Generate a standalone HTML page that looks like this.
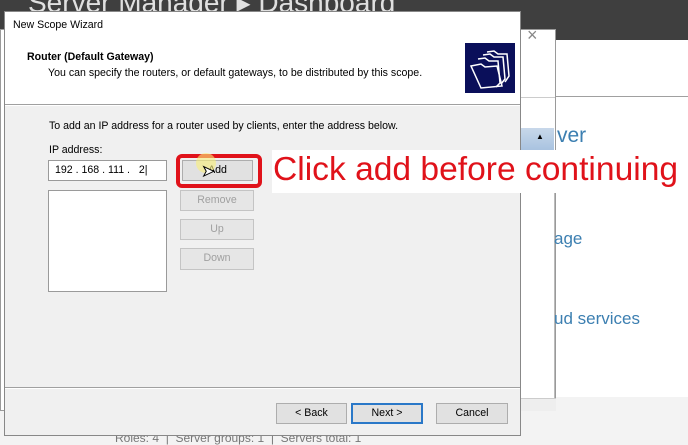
<!DOCTYPE html>
<html><head><style>
*{margin:0;padding:0;box-sizing:border-box}
body{width:688px;height:442px;overflow:hidden;position:relative;background:#f3f3f3;font-family:"Liberation Sans",sans-serif;font-size:10.6px;color:#000}
.a{position:absolute;white-space:nowrap}
.btn{position:absolute;background:#e1e1e1;border:1px solid #adadad;text-align:center;font-size:10.6px;line-height:19px;color:#000}
.dis{color:#a0a0a0;background:#e6e6e6;border-color:#c4c4c4}
</style></head><body>
<div class="a" style="left:0;top:0;width:688px;height:40px;background:#3f3f3f"></div>
<div class="a" style="left:28px;top:-14px;font-size:28px;color:#e0e0e0">Server Manager ▸ Dashboard</div>
<div class="a" style="left:555px;top:40px;width:133px;height:357px;background:#fff"></div>
<div class="a" style="left:555px;top:96px;width:133px;height:1px;background:#a0a0a0"></div>
<div class="a" style="left:0;top:29px;width:556px;height:382px;background:#fff;border:1px solid #9a9a9a"></div>
<div class="a" style="left:527px;top:25px;font-size:18px;color:#888">×</div>
<div class="a" style="left:520px;top:97px;width:35px;height:1px;background:#ccc"></div>
<div class="a" style="left:520px;top:128px;width:34px;height:40px;background:#eaeaea;border-top:2px solid #888"></div>
<div class="a" style="left:520px;top:128px;width:34px;height:22px;background:linear-gradient(#c8d8ea,#a9c3e0)"></div>
<div class="a" style="left:536px;top:132px;font-size:8px">▲</div>
<div class="a" style="left:554px;top:150px;width:1px;height:250px;background:#bbb"></div>
<div class="a" style="left:520px;top:398px;width:36px;height:13px;background:#eee;border-top:1px solid #ccc"></div>
<div class="a" style="left:557px;top:124px;font-size:21px;color:#3c7fb1">ver</div>
<div class="a" style="left:554px;top:229px;font-size:17px;color:#3c7fb1">age</div>
<div class="a" style="left:554px;top:309px;font-size:17px;color:#3c7fb1">ud services</div>
<div class="a" style="left:115px;top:431px;font-size:12px;color:#777">Roles: 4 &nbsp;| &nbsp;Server groups: 1 &nbsp;| &nbsp;Servers total: 1</div>

<div class="a" style="left:4px;top:11px;width:517px;height:425px;background:#f0f0f0;border:1px solid #888"></div>
<div class="a" style="left:5px;top:12px;width:515px;height:92px;background:#fff"></div>
<div class="a" style="left:13px;top:19px">New Scope Wizard</div>
<div class="a" style="left:27px;top:51px;font-weight:bold">Router (Default Gateway)</div>
<div class="a" style="left:48px;top:67px">You can specify the routers, or default gateways, to be distributed by this scope.</div>
<div class="a" style="left:465px;top:43px;width:50px;height:50px;background:#0a0f5a">
<svg width="50" height="50" viewBox="0 0 50 50" fill="none" stroke="#fff" stroke-width="1.5"><path d="M22 9l7-1 4 3 9 0 2 22-4 6"/><path d="M18 12l7-1 4 3 9 0 2 22-4 5"/><path d="M13 16l7-1 4 3 9 0 2 22-4 4"/><path d="M6 23l10-2 4 3 12-1 5 20-21 2z"/></svg></div>
<div class="a" style="left:5px;top:104px;width:515px;height:1px;background:#a0a0a0"></div>
<div class="a" style="left:5px;top:105px;width:515px;height:1px;background:#fff"></div>
<div class="a" style="left:49px;top:120px">To add an IP address for a router used by clients, enter the address below.</div>
<div class="a" style="left:49px;top:144px">IP address:</div>
<div class="a" style="left:48px;top:160px;width:119px;height:21px;background:#fff;border:1px solid #9a9a9a;padding:3px 6px;white-space:pre">192 . 168 . 111 .   2|</div>
<div class="a" style="left:48px;top:190px;width:119px;height:102px;background:#fff;border:1px solid #9a9a9a"></div>
<div class="btn" style="left:182px;top:160px;width:71px;height:21px">Add</div>
<div class="a" style="left:176px;top:154px;width:86px;height:34px;border:4px solid #e0121a;border-radius:6px"></div>
<div class="a" style="left:196px;top:153px;width:20px;height:20px;border-radius:50%;background:rgba(250,240,120,.6)"></div>
<div class="a" style="left:202px;top:162px;font-size:15px;color:#fff;-webkit-text-stroke:1px #000">➤</div>
<div class="btn dis" style="left:180px;top:190px;width:74px;height:21px">Remove</div>
<div class="btn dis" style="left:180px;top:219px;width:74px;height:21px">Up</div>
<div class="btn dis" style="left:180px;top:248px;width:74px;height:22px">Down</div>
<div class="a" style="left:272px;top:150px;width:416px;height:43px;background:#fff"></div>
<div class="a" style="left:273px;top:151px;font-size:33.6px;color:#e0121a">Click add before continuing</div>
<div class="a" style="left:5px;top:387px;width:515px;height:1px;background:#a0a0a0"></div>
<div class="a" style="left:5px;top:388px;width:515px;height:1px;background:#fff"></div>
<div class="btn" style="left:276px;top:403px;width:71px;height:21px">&lt; Back</div>
<div class="btn" style="left:351px;top:403px;width:72px;height:21px;border:2px solid #2a78c8;line-height:17px">Next &gt;</div>
<div class="btn" style="left:436px;top:403px;width:72px;height:21px">Cancel</div>
</body></html>
